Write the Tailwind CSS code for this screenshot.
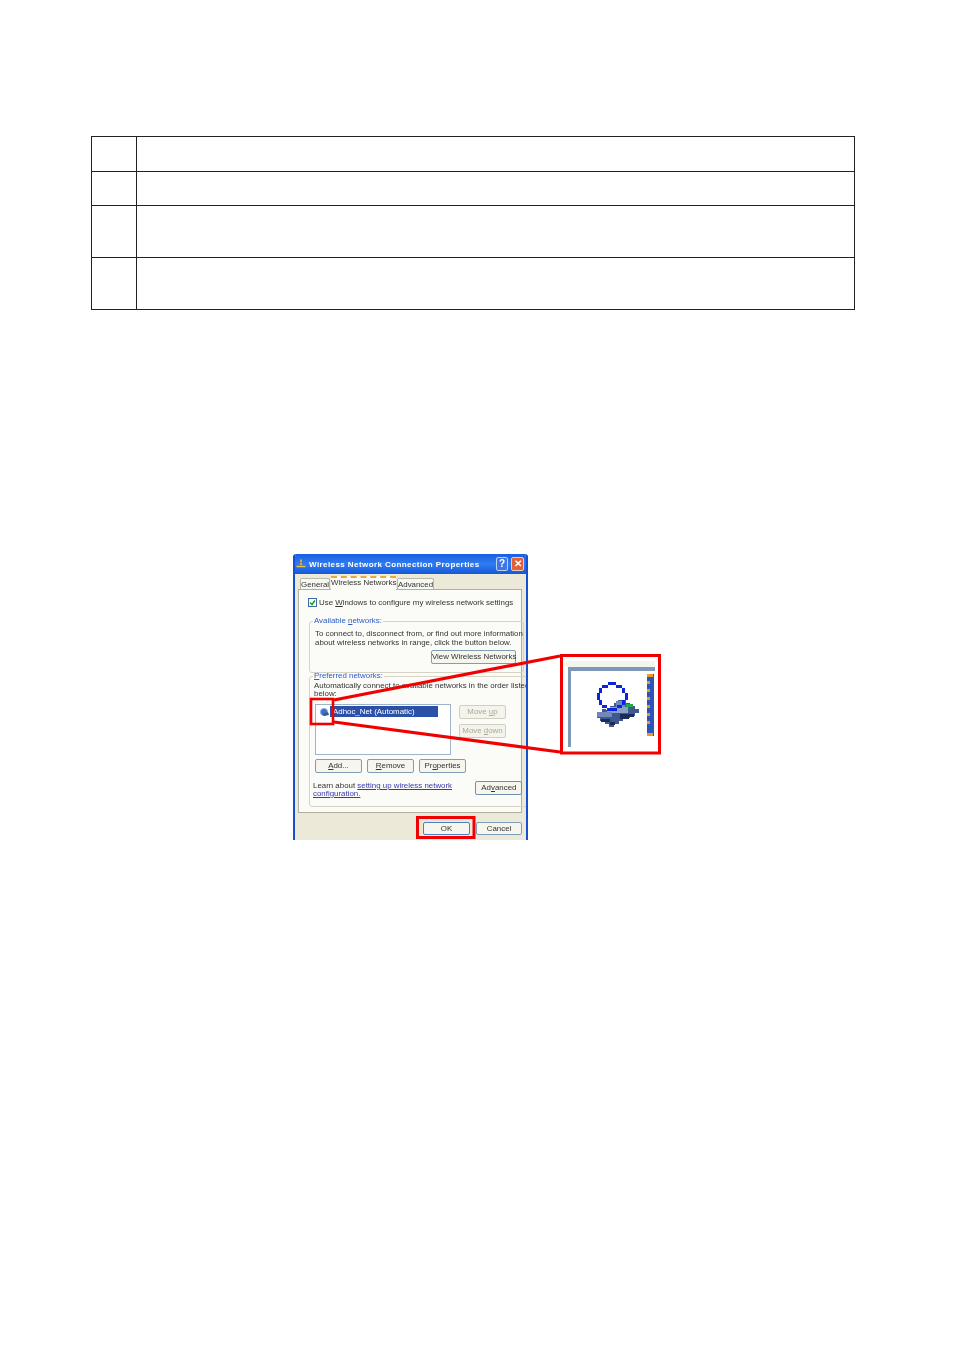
<!DOCTYPE html>
<html><head><meta charset="utf-8"><script src="https://cdn.jsdelivr.net/npm/@tailwindcss/browser@4"></script></head>
<body class="bg-white">
<div class="relative w-[954px] h-[1350px] overflow-hidden bg-white pt-[136px] pl-[91px] font-['Liberation_Sans',sans-serif]">
  <!-- table -->
  <div class="w-[764px] border-t border-l border-[#222]">
    <div class="flex h-[35px] border-b border-[#222]"><div class="w-[45px] border-r border-[#222]"></div><div class="flex-1 border-r border-[#222]"></div></div>
    <div class="flex h-[34px] border-b border-[#222]"><div class="w-[45px] border-r border-[#222]"></div><div class="flex-1 border-r border-[#222]"></div></div>
    <div class="flex h-[52px] border-b border-[#222]"><div class="w-[45px] border-r border-[#222]"></div><div class="flex-1 border-r border-[#222]"></div></div>
    <div class="flex h-[52px] border-b border-[#222]"><div class="w-[45px] border-r border-[#222]"></div><div class="flex-1 border-r border-[#222]"></div></div>
  </div>

  <!-- dialog -->
  <div class="ml-[202px] mt-[244px] w-[235px] h-[286px] flex flex-col bg-[#ece9d8] border-x-2 border-[#1450d0] rounded-t-[3px] overflow-hidden blur-[0.35px] text-[7.9px] leading-[9px] text-[#333]">
    <div class="h-[20px] shrink-0 -mx-[2px] px-[3px] flex items-center bg-gradient-to-b from-[#1a5fe0] via-[#2f7cf0] to-[#1458d8]">
      <svg class="w-[10px] h-[10px] shrink-0" viewBox="0 0 10 10"><path d="M5 0.5V6M0.5 7.5H9.5" stroke="#f0c040" stroke-width="1.6"/><path d="M3 4.5L5 3L7 4.5" stroke="#a07820" fill="none"/></svg>
      <span class="ml-[3px] font-bold text-[8px] tracking-[0.42px] text-white whitespace-nowrap">Wireless Network Connection Properties</span>
      <div class="ml-auto mr-[1px] flex gap-[3px]">
        <div class="w-[12px] h-[14px] rounded-[2px] bg-[#3d78e8] border border-[#bcd0f4] text-white text-[10px] font-bold leading-[12px] text-center">?</div>
        <div class="w-[13px] h-[14px] rounded-[2px] bg-[#e0603a] border border-[#f4c8b8] text-white text-[10px] font-bold leading-[12px] text-center">✕</div>
      </div>
    </div>
    <div class="h-[15px] shrink-0 pl-[5px] flex items-end gap-[1px]">
      <div class="relative z-10 w-[30px] h-[11px] text-center leading-[11px] bg-[#f8f8f2] border border-b-0 border-[#b8b8a8] rounded-t-[2px]">General</div>
      <div class="relative z-20 -mb-[1px] w-[65px] h-[14px] text-center leading-[10px] bg-[#fbfbf7] border-t-2 border-[#eda83a] border-dashed whitespace-nowrap">Wireless Networks</div>
      <div class="relative z-10 w-[37px] h-[11px] text-center leading-[11px] bg-[#f8f8f2] border border-b-0 border-[#b8b8a8] rounded-t-[2px]">Advanced</div>
    </div>
    <div class="ml-[3px] w-[224px] h-[224px] shrink-0 bg-[#fbfbf7] border border-[#b0b0a0] flex flex-col">
      <div class="mt-[8px] ml-[9px] flex items-center h-[9px]">
        <div class="w-[9px] h-[9px] shrink-0 border border-[#3a6ea5] bg-white flex items-center justify-center"><svg class="w-[7px] h-[7px]" viewBox="0 0 7 7"><path d="M1 3.5L3 5.5L6 1.5" stroke="#22a020" stroke-width="1.5" fill="none"/></svg></div>
        <span class="ml-[2px] whitespace-nowrap">Use <u>W</u>indows to configure my wireless network settings</span>
      </div>
      <fieldset class="mt-[10px] ml-[10px] w-[205px] h-[56px] border border-[#d6d3c4] rounded-[3px] flex flex-col">
        <legend class="ml-[3px] px-[1px] leading-[8px] text-[#2c5cc4]">Available <u>n</u>etworks:</legend>
        <div class="mt-[4px] ml-[5px] whitespace-nowrap">To connect to, disconnect from, or find out more information<br>about wireless networks in range, click the button below.</div>
        <div class="mt-[3px] mr-[7px] self-end w-[85px] h-[14px] text-center leading-[12px] rounded-[2px] bg-[#f6f6ee] border border-[#7f9db9] whitespace-nowrap">View Wireless Networks</div>
      </fieldset>
      <fieldset class="-mt-[1px] ml-[10px] w-[205px] h-[135px] border border-[#d6d3c4] rounded-[3px] flex flex-col">
        <legend class="ml-[3px] px-[1px] leading-[8px] text-[#2c5cc4]"><u>P</u>referred networks:</legend>
        <div class="mt-[2px] ml-[4px] whitespace-nowrap leading-[8px]">Automatically connect to available networks in the order listed<br>below:</div>
        <div class="mt-[6px] ml-[5px] flex h-[51px]">
          <div class="w-[136px] h-[51px] bg-white border border-[#9db4cc] pl-[3px] pt-[1px] flex items-start">
            <svg class="w-[11px] h-[11px] shrink-0 mt-[1px]" viewBox="0 0 11 11"><circle cx="5" cy="5" r="3.6" fill="#3a70d0" stroke="#8fb0e8"/><path d="M3 7L9 5L10 8L5 9Z" fill="#45568c"/></svg>
            <div class="ml-[0px] w-[108px] h-[11px] pl-[3px] bg-[#2b50a8] text-white leading-[11px] whitespace-nowrap">Adhoc_Net (Automatic)</div>
          </div>
          <div class="ml-[8px] w-[47px] text-[#a8a89c]">
            <div class="mt-[1px] h-[14px] text-center leading-[12px] rounded-[2px] bg-[#f4f4ec] border border-[#d0cfc2]">Move <u>u</u>p</div>
            <div class="mt-[5px] h-[14px] text-center leading-[12px] rounded-[2px] bg-[#f4f4ec] border border-[#d0cfc2]">Move <u>d</u>own</div>
          </div>
        </div>
        <div class="mt-[4px] ml-[5px] flex gap-[5px]">
          <div class="w-[47px] h-[14px] text-center leading-[12px] rounded-[2px] bg-[#f6f6ee] border border-[#7f9db9]"><u>A</u>dd...</div>
          <div class="w-[47px] h-[14px] text-center leading-[12px] rounded-[2px] bg-[#f6f6ee] border border-[#7f9db9]"><u>R</u>emove</div>
          <div class="w-[47px] h-[14px] text-center leading-[12px] rounded-[2px] bg-[#f6f6ee] border border-[#7f9db9]">Pr<u>o</u>perties</div>
        </div>
        <div class="mt-[8px] ml-[3px] mr-[7px] flex items-start justify-between">
          <div class="mt-[1px] whitespace-nowrap leading-[8px]">Learn about <u class="text-[#3838b0]">setting up wireless network</u><br><u class="text-[#3838b0]">configuration.</u></div>
          <div class="w-[47px] h-[14px] text-center leading-[12px] rounded-[2px] bg-[#f6f6ee] border border-[#6f8fb5]">Ad<u>v</u>anced</div>
        </div>
      </fieldset>
    </div>
    <div class="mt-[9px] mr-[4px] flex justify-end gap-[6px]">
      <div class="w-[47px] h-[13px] text-center leading-[11px] rounded-[2px] bg-[#f6f6ee] border border-[#4f7fc0]">OK</div>
      <div class="w-[46px] h-[13px] text-center leading-[11px] rounded-[2px] bg-[#f6f6ee] border border-[#7f9db9]">Cancel</div>
    </div>
  </div>

  <!-- callout drawing, lies over the dialog -->
  <svg class="absolute left-0 top-0 w-[954px] h-[1350px] pointer-events-none" viewBox="0 0 954 1350">
    <path d="M334 700L560 656" stroke="#f00000" stroke-width="3.2"/>
    <path d="M334 722L560 752" stroke="#f00000" stroke-width="3.2"/>
    <rect x="311" y="699" width="22" height="25" fill="none" stroke="#f00000" stroke-width="2.6"/>
    <rect x="417.500" y="817.500" width="56.500" height="20" fill="none" stroke="#f00000" stroke-width="3"/>
    <rect x="561.500" y="655.500" width="98" height="97.500" fill="#fff" stroke="#f00000" stroke-width="3"/>
    <g shape-rendering="crispEdges">
      <rect x="566" y="661" width="89" height="6" fill="#f3f5ef"/>
      <rect x="568" y="667" width="87" height="4" fill="#7f98b8"/>
      <rect x="568" y="667" width="3" height="80" fill="#7f98b8"/>
      <!-- device -->
      <path d="M597 712h5v-3h8v-3h4v-3h4v-3h8v3h4v3h5v3h4v4h-4v3h-5v2h-7v3h-4v3h-5v3h-5v-3h-4v-3h-5v-3h-3z" fill="#3f5890"/>
      <path d="M607 707h21v6h-21z" fill="#8aa0c8"/>
      <path d="M616 701h9v6h-9z" fill="#7088b8"/>
      <path d="M597 712h15v5h-15z" fill="#7088b8"/>
      <path d="M601 719h9v3h5v3h-5v-3h-9zM620 714h14v3h-5v2h-9z" fill="#1c2c58"/>
      <rect x="626" y="704" width="7" height="3" fill="#26a84a"/>
      <rect x="606" y="706" width="4" height="4" fill="#fff"/>
      <!-- ring -->
      <path d="M608 682h8v3h-8zM602 685h6v3h-6zM616 685h6v3h-6zM599 688h3v5h-3zM622 688h3v5h-3zM597 693h3v7h-3zM625 693h3v7h-3zM599 700h3v5h-3zM622 700h3v5h-3zM602 705h5v3h-5zM617 705h5v3h-5zM607 708h10v3h-10z" fill="#0c24e0"/>
      <!-- stripe -->
      <rect x="647" y="674" width="7" height="62" fill="#2d55b8"/>
      <path d="M647 674h6v3h-6zM647 681h3v3h-3zM647 689h3v3h-3zM647 697h3v3h-3zM647 705h3v3h-3zM647 713h3v3h-3zM647 721h3v3h-3zM647 733h6v3h-6z" fill="#e89a30"/>
    </g>
  </svg>
</div>
</body></html>
